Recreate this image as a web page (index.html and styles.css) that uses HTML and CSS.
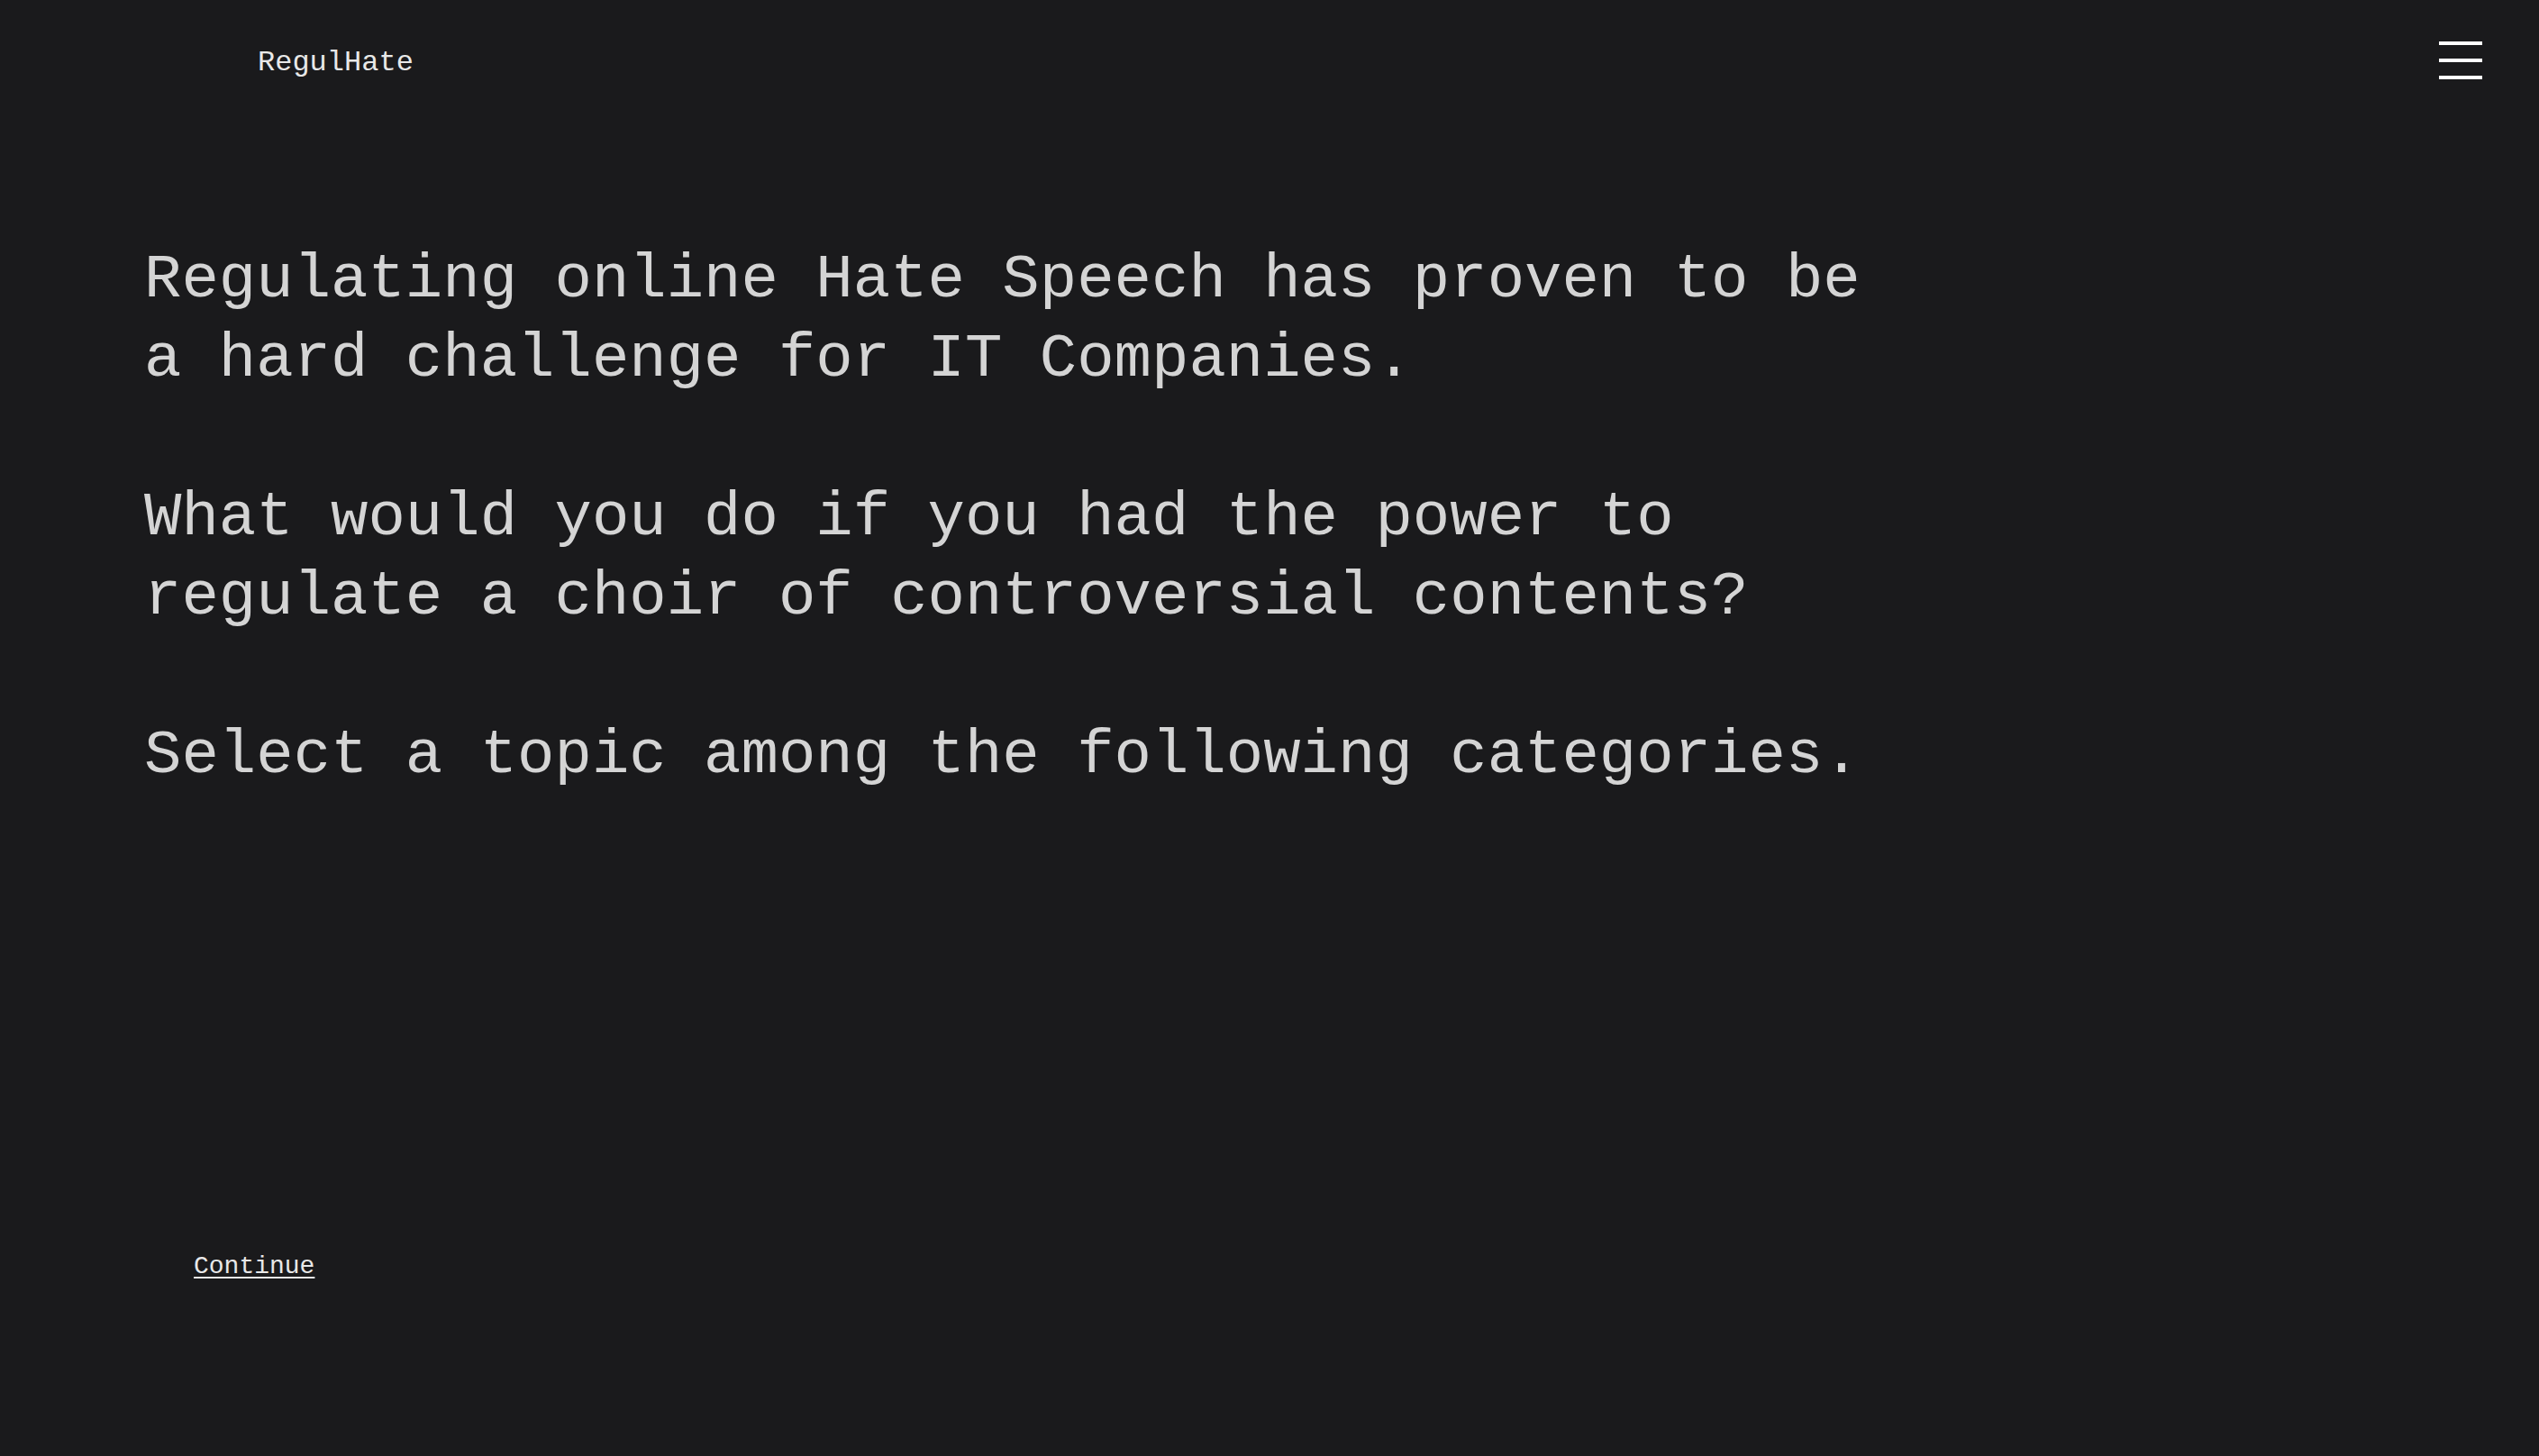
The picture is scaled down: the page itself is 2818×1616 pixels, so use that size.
FILE: index.html
```html
<!DOCTYPE html>
<html lang="en">
<head>
<meta charset="utf-8">
<title>RegulHate</title>
<link rel="stylesheet" href="styles.css">
</head>
<body>
<header class="topbar">
  <a class="logo" href="#">RegulHate</a>
  <button class="menu" aria-label="Menu">
    <span class="bar"></span>
    <span class="bar"></span>
    <span class="bar"></span>
  </button>
</header>
<main class="intro">
  <p class="lead">Regulating online Hate Speech has proven to be a hard challenge for IT Companies.</p>
  <p class="lead">What would you do if you had the power to regulate a choir of controversial contents?</p>
  <p class="lead">Select a topic among the following categories.</p>
</main>
<footer class="actions">
  <a class="continue" href="#">Continue</a>
</footer>
</body>
</html>
```

FILE: styles.css
```css
html, body {
  margin: 0;
  padding: 0;
  background: #1a1a1c;
}

body {
  min-height: 100vh;
  font-family: "Liberation Mono", "DejaVu Sans Mono", monospace;
  color: #e6e6e6;
}

.topbar {
  height: 134px;
  display: flex;
  align-items: center;
  justify-content: space-between;
  padding: 0 63px 0 286px;
}

.logo {
  font-size: 32px;
  line-height: 32px;
  color: #e8e8e8;
  text-decoration: none;
  padding-top: 6px;
}

.menu {
  width: 48px;
  height: 42px;
  padding: 0;
  margin: 0;
  border: 0;
  background: transparent;
  display: flex;
  flex-direction: column;
  justify-content: space-between;
  cursor: pointer;
}

.bar {
  display: block;
  width: 48px;
  height: 4px;
  background: #ffffff;
}

.intro {
  padding: 133px 0 0 160px;
}

.lead {
  margin: 0 0 88px;
  max-width: 47ch;
  font-size: 69px;
  line-height: 88px;
  color: #d4d4d4;
}

.lead:last-child {
  margin-bottom: 0;
}

.actions {
  padding: 506px 0 0 215px;
}

.continue {
  font-size: 28px;
  line-height: 33.6px;
  color: #e8e8e8;
  text-decoration: underline;
  text-decoration-thickness: 2px;
  text-underline-offset: 4px;
}
```
